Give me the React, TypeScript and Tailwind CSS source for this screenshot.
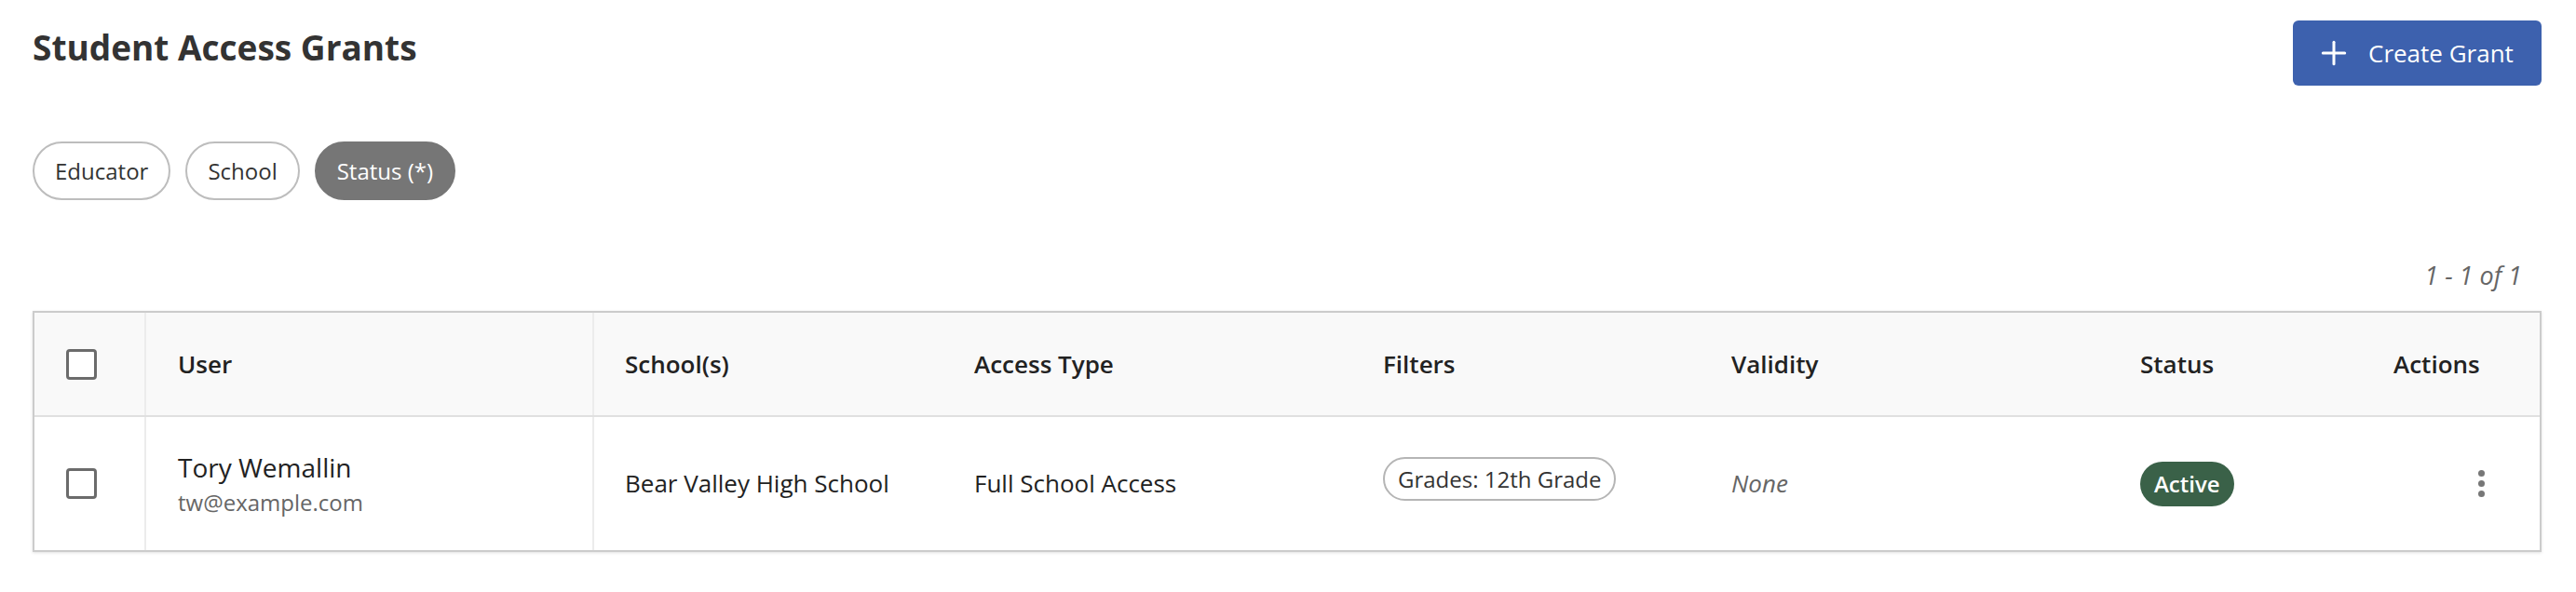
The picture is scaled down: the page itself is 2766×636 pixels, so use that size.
import { Plus } from "lucide-react";

const filters = [
  { label: "Educator", active: false },
  { label: "School", active: false },
  { label: "Status (*)", active: true },
];

const Checkbox = () => (
  <span className="block w-[33px] h-[33px] rounded-[4px] border-[3px] border-[#6b6b6b] bg-white"></span>
);

const cols = "grid grid-cols-[120px_481px_375px_439px_374px_439px_272px_1fr]";

const App = () => {
  return (
    <div className="min-h-screen bg-white pl-[35px] pr-[37px] pt-[22px] font-['Open_Sans',sans-serif] text-[#222]">
      <div className="flex justify-between items-start">
        <h1 className="mt-[5px] text-[37px] leading-[48px] font-bold text-[#333]">
          Student Access Grants
        </h1>
        <button className="h-[70px] w-[267px] rounded-[6px] bg-[#3d61ae] text-white flex items-center pl-[24px] gap-[17px] text-[26px] font-medium">
          <Plus className="w-[40px] h-[40px]" strokeWidth={1.8} />
          Create Grant
        </button>
      </div>

      <div className="mt-[60px] flex gap-[16px]">
        {filters.map((f) => (
          <button
            key={f.label}
            className={`${f.active ? "bg-[#767676] border-[#767676] text-white" : "bg-white border-[#bdbdbd] text-[#333]"} h-[63px] px-[22px] rounded-full border-2 text-[24px]`}
          >
            {f.label}
          </button>
        ))}
      </div>

      <div className="mt-[63px] mb-[20px] pr-[21px] text-right italic text-[27px] leading-[36px] text-[#666]">
        1 - 1 of 1
      </div>

      <div className="border-2 border-[#cccccc] shadow-[0_1px_3px_rgba(0,0,0,0.12)]">
        <div className={`${cols} h-[112px] bg-[#f9f9f9] border-b-2 border-[#e0e0e0] text-[26px] font-semibold`}>
          <div className="flex items-center pl-[34px] border-r-2 border-[#ececec]">
            <Checkbox />
          </div>
          <div className="flex items-center pl-[34px] border-r-2 border-[#ececec]">User</div>
          <div className="flex items-center pl-[33px]">School(s)</div>
          <div className="flex items-center pl-[33px]">Access Type</div>
          <div className="flex items-center pl-[33px]">Filters</div>
          <div className="flex items-center pl-[33px]">Validity</div>
          <div className="flex items-center pl-[33px]">Status</div>
          <div className="flex items-center pl-[33px]">Actions</div>
        </div>

        <div className={`${cols} h-[143px] text-[26px] text-[#222]`}>
          <div className="flex items-center pl-[34px] border-r-2 border-[#ececec]">
            <Checkbox />
          </div>
          <div className="flex flex-col justify-center pl-[34px] border-r-2 border-[#ececec]">
            <span className="text-[28px] leading-[38px]">Tory Wemallin</span>
            <span className="mt-[2px] text-[24px] leading-[34px] text-[#666]">tw@example.com</span>
          </div>
          <div className="flex items-center pl-[33px]">Bear Valley High School</div>
          <div className="flex items-center pl-[33px]">Full School Access</div>
          <div className="flex items-center pl-[33px]">
            <span className="mb-[10px] h-[47px] px-[14px] flex items-center rounded-full border-2 border-[#b5b5b5] text-[24px] text-[#333]">
              Grades: 12th Grade
            </span>
          </div>
          <div className="flex items-center pl-[33px] italic text-[#666]">None</div>
          <div className="flex items-center pl-[33px]">
            <span className="h-[48px] px-[15px] flex items-center rounded-full bg-[#3a6148] text-white text-[24px] font-semibold">
              Active
            </span>
          </div>
          <div className="flex items-center pl-[122px]">
            <button className="flex flex-col gap-[4px] p-[2px]">
              <span className="w-[7px] h-[7px] rounded-full bg-[#777]"></span>
              <span className="w-[7px] h-[7px] rounded-full bg-[#777]"></span>
              <span className="w-[7px] h-[7px] rounded-full bg-[#777]"></span>
            </button>
          </div>
        </div>
      </div>
    </div>
  );
};

export default App;
